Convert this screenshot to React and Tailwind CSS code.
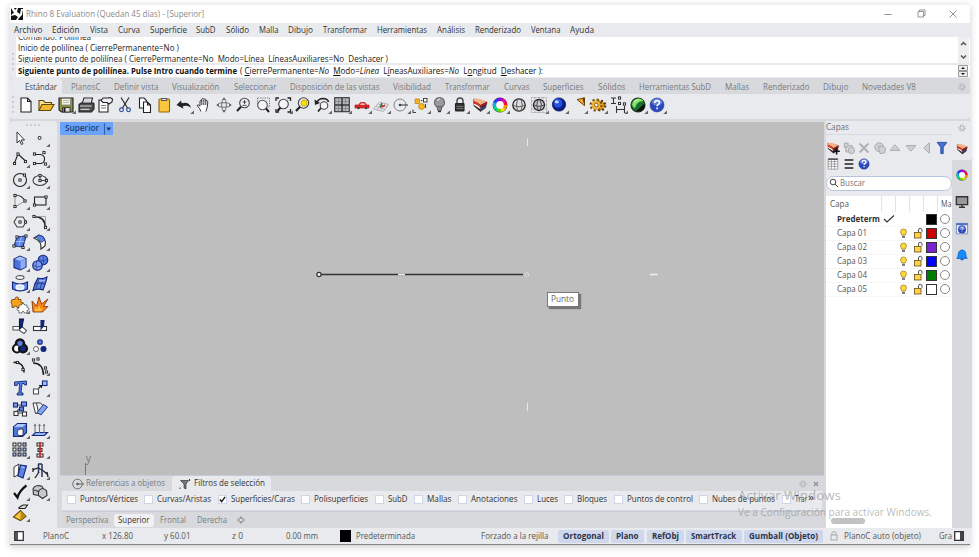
import React, { useLayoutEffect, useRef, useState } from "react";

/* Single-line label, condensed or widened by a computed factor so it fills the given width. */
function Fit({ w, children, className = "" }) {
  const ref = useRef(null);
  const [k, setK] = useState(1);
  useLayoutEffect(() => {
    setK(w / ref.current.getBoundingClientRect().width);
  }, [w]);
  return (
    <span className={"block shrink-0 whitespace-pre " + className} style={{ width: w }}>
      <span ref={ref} className="inline-block origin-left" style={{ transform: `scaleX(${k})` }}>{children}</span>
    </span>
  );
}

const K = "#222";
const B = "#5b83e6";
const N = "#14277a";

function Cell({ children, tri, className = "" }) {
  return (
    <svg viewBox="0 0 20 20" className={"h-5 w-5 shrink-0 overflow-visible " + className} fill="none" stroke={K} strokeWidth="1.1">
      {children}
      {tri && <path d="M20 15.500V19H16.200Z" fill="#666" stroke="none" />}
    </svg>
  );
}

/* Small square control points. */
function Pts({ p }) {
  return p.map(([x, y], i) => (
    <rect key={i} x={x - 1.1} y={y - 1.1} width="2.2" height="2.2" fill="#fff" stroke="#222" strokeWidth=".9" />
  ));
}

function Help({ r = 7 }) {
  return (
    <>
      <circle cx="10" cy="10" r={r} fill="#2c49bb" stroke="#233a91" strokeWidth=".6" />
      <ellipse cx="10" cy="7" rx={r * 0.75} ry={r * 0.5} fill="#7790e6" stroke="none" opacity=".75" />
      <path d="M7.700 8q0-2.400 2.400-2.400t2.400 2q0 1.200-1.400 2-1 .6-1 1.700M10.100 12.600v1.600" stroke="#fff" strokeWidth="1.600" />
    </>
  );
}

function Wheel({ r = 5.5, w = 3.2 }) {
  const c = 2 * Math.PI * r;
  const cols = ["#ff9800", "#ffee00", "#54e000", "#00d890", "#00b8f0", "#2040ff", "#9000f0", "#f000b0", "#ff1030"];
  return (
    <>
      <circle cx="10" cy="10" r={r + w / 2 + 0.3} fill="#333" stroke="none" />
      {cols.map((k, i) => (
        <circle key={k} cx="10" cy="10" r={r} stroke={k} strokeWidth={w} strokeDasharray={`${c / 9 + 0.3} ${c}`} strokeDashoffset={-(i * c) / 9} />
      ))}
      <circle cx="10" cy="10" r={r - w / 2} fill="#fff" stroke="none" />
    </>
  );
}

function LayerWedge() {
  return (
    <>
      <path d="M3.500 4l6 1 7.500 2-1.500 6-5 3.500-6.500-5.500z" fill="#3a1512" stroke="#3a1512" strokeWidth=".5" />
      <path d="M3.500 4q5-1.500 9 1l4.500 1.500-6.500 3.500q-3-3-7-4z" fill="#f7b28a" stroke="none" />
      <path d="M3.500 6q4 1 7 4.500v1.800Q7.500 9 3.700 8z" fill="#f3381f" stroke="none" />
      <path d="M10.500 10.500L17 7l-.4 2-6.100 3.300z" fill="#b01f1a" stroke="none" />
      <path d="M3.800 8.500q4 1 6.700 4.200v1.500L4 10z" fill="#f6f6f6" stroke="none" />
      <path d="M10.500 13l5.500-3-.7 3-4.800 3z" fill="#37457f" stroke="none" />
    </>
  );
}

const TOP = [
  [0, <path d="M5 3h6.500L15 6.500V17H5zM11.500 3v3.500H15" fill="#fff" />],
  [0, <><path d="M3 15.500V5.500h4.500l1.500 2h6.500v2.500" fill="#f7e08b" stroke="#5d480c" /><path d="M3 15.500l3-6h12l-3.500 6z" fill="#f5b92a" stroke="#5d480c" /></>],
  [1, <><path d="M3 3h14v14H5.500L3 15z" fill="#8c8e42" /><path d="M5.500 3.500h9V10h-9z" fill="#f2f2e2" stroke="#777" strokeWidth=".7" /><path d="M7 5.500h6M7 7.500h6" stroke="#aaa" strokeWidth=".8" /><path d="M6.500 12.500h7.500V17H6.500z" fill="#ddd" strokeWidth=".8" /><path d="M8.500 13v4" strokeWidth="2" /></>],
  [0, <><path d="M6 9l2-6h8.500L15 9" fill="#fff" /><path d="M3 9.500L5 8h12.500l.5 1v5l-2.500 3H3z" fill="#4c4c4c" /><path d="M4 11h11.500" stroke="#ccc" /><path d="M8.500 5h6M8 7h6" stroke="#999" strokeWidth=".8" /><path d="M4.500 14.300h9" stroke="#e4e4e4" /></>],
  [0, <><path d="M4 5h9v12H4z" fill="#fff" /><path d="M6 5.500L8 3h5l2-.5 2.500 1.500-.5 3-3 2-2-1.500H8z" fill="#eee" /><path d="M6 10.500h5M6 13h5" stroke="#777" /></>],
  [0, <><path d="M6 2.500l6.500 10.500M14 2.500L7.500 13" /><circle cx="6.500" cy="14.800" r="1.900" stroke="#26479a" /><circle cx="13.500" cy="14.800" r="1.900" stroke="#26479a" /></>],
  [0, <><path d="M4.500 3h4.500l2.500 2.500V13h-7z" fill="#fff" /><path d="M8.500 7h4l3 3v7.500h-7zM12.500 7v3h3" fill="#fff" /></>],
  [0, <><rect x="5" y="4" width="10.500" height="13" rx="1" fill="#fcc63c" stroke="#92640c" /><path d="M7.700 5.500V3.500h5v2z" fill="#eee" stroke="#555" /></>],
  [1, <path d="M2.500 10L7 5.500l.7 2.700q7.300-2.200 9.300 4.500-3.500-3-8.300-1.500l.8 2.600z" fill="#222" stroke="none" />],
  [0, <path d="M7 16.500q-1-3-4-6 1-1.500 3 .5V6q.9-1.300 1.800 0V4q1-1.300 2 0v.5q1-1.300 2 0V6q1.200-1 2 .5 0 6-2 10M7.800 6v4M9.800 5v5M11.800 5.500v4.500" fill="#fff" strokeWidth=".9" />],
  [0, <><ellipse cx="10" cy="10" rx="6.500" ry="2.300" stroke="#666" strokeWidth=".9" /><ellipse cx="10" cy="10" rx="2.300" ry="6.500" stroke="#666" strokeWidth=".9" /><path d="M10 2l-1.500 3h3zM10 18l-1.500-3h3zM2 10l3-1.500v3zM18 10l-3-1.500v3z" fill="#666" stroke="none" /></>],
  [0, <><circle cx="11.500" cy="8" r="4.800" fill="#f4f4f4" stroke="#444" /><path d="M8 11.800L4 16" strokeWidth="2" /><path d="M9.500 7h4M11.500 5v4M9.500 10.300h4" strokeWidth=".8" /></>],
  [0, <><rect x="4.500" y="3" width="12" height="9" stroke="#666" strokeDasharray="1.200 1.200" strokeWidth=".9" /><circle cx="9.500" cy="10" r="4.800" fill="#f4f4f4" stroke="#555" /><path d="M13 13.500l3 3.500" strokeWidth="2" /></>],
  [1, <><path d="M3 6V3h3M14.500 3h3v3M3 14v3h3M14.500 17h3v-3" strokeWidth="1.300" /><circle cx="10.500" cy="9" r="4.800" fill="#f4f4f4" stroke="#444" /><path d="M7.500 12.500L4.500 16" strokeWidth="2" /></>],
  [0, <><circle cx="11.500" cy="8" r="5.200" fill="#e9e9e9" stroke="#444" /><circle cx="12" cy="8" r="3" fill="#ffe000" stroke="#a08c00" strokeWidth=".6" /><path d="M8 11.800L4 16" strokeWidth="2.200" /></>],
  [1, <><path d="M5 7q2-3.500 6-3.500 5 .2 5.500 3.500" strokeWidth="1.600" /><path d="M2.500 4.500l.5 5.500 5-2z" fill="#222" stroke="none" /><circle cx="12" cy="10.500" r="3.800" fill="#f4f4f4" stroke="#444" /><path d="M9 13L6 16.500" strokeWidth="1.800" /></>],
  [1, <><rect x="2.700" y="2.700" width="14.600" height="14" fill="#b4b8bd" stroke="#333" /><path d="M10 3v14M3 10h14" stroke="#333" strokeWidth="1.500" /><path d="M6.500 3v14M13.500 3v14M3 6.500h14M3 13.500h14" stroke="#666" strokeWidth=".5" /></>],
  [1, <><path d="M3 10h3.500L8.500 7.500H13l1.500 2.500h2.500v3H3z" fill="#da2626" stroke="#c01a1a" strokeWidth=".7" /><path d="M9 8.300h3.300l.8 1.700H8z" fill="#f3b6b0" stroke="none" /><circle cx="6.500" cy="13" r="1.300" fill="#444" stroke="none" /><circle cx="14" cy="13" r="1.300" fill="#444" stroke="none" /></>],
  [1, <><path d="M2.500 14l6-7 9 2.500-5 7zM5 11.500l9 3M7 9l9 2.500M6 15l5-7M9.500 15.500l5-7" stroke="#a5a5a5" strokeWidth=".8" /><path d="M9 12l5-1.500" stroke="#c22" strokeWidth="1.400" /><path d="M9.500 12l1.500-4" stroke="#197a2d" strokeWidth="1.400" /></>],
  [1, <><circle cx="9" cy="10" r="6" stroke="#777" strokeWidth=".9" /><path d="M9 10H17" stroke="#444" /><circle cx="9" cy="10" r="1.300" fill="#444" stroke="none" /></>],
  [1, <><rect x="4" y="4" width="4.500" height="4.500" fill="#f8b51c" stroke="#ad7200" strokeWidth=".6" /><rect x="12.500" y="3.500" width="3.500" height="3.500" fill="#fff" stroke="#333" strokeWidth=".9" /><circle cx="10.500" cy="11.500" r="3" fill="#fbb91c" stroke="#a87203" strokeWidth=".6" /><path d="M10 5.500h1.500M2 14.500v3h3M14.500 9v4" stroke="#444" /></>],
  [1, <><circle cx="9.500" cy="7.500" r="5" fill="#9a9a9a" stroke="#666" /><path d="M7 11.500l1 4h3l1-4z" fill="#8b8b8b" stroke="#666" /><path d="M8 16.500h3" stroke="#333" strokeWidth="1.400" /><path d="M7.500 5.500q1-1.500 2.500-1.500" stroke="#eee" /></>],
  [1, <><path d="M7 9V6q0-3 3-3t3 3v3" strokeWidth="1.400" stroke="#444" /><rect x="5.500" y="8.500" width="8.500" height="7.500" rx=".5" fill="#333" /><path d="M6.500 11.500h7M6.500 13.500h7" stroke="#888" strokeWidth=".8" /></>],
  [1, <LayerWedge />],
  [1, <Wheel />],
  [0, <><circle cx="10" cy="10" r="6.200" fill="#ddd" stroke="#222" strokeWidth="1.300" /><path d="M3.800 10.500q6.200 2.500 12.400 0M8.500 4q-2 6 0 12M12 4q2.500 6 0 12" stroke="#555" strokeWidth=".9" /></>],
  [1, <><path d="M2.500 2.500h15v15h-15zM2.500 6h15M2.500 10h15M2.500 14h15M6 2.500v15M10 2.500v15M14 2.500v15" stroke="#777" strokeWidth=".7" strokeDasharray="1 1" /><circle cx="10" cy="10" r="5.500" fill="#c6c6c6" stroke="#222" strokeWidth="1.300" /><path d="M4.500 10q5.500 3 11 0M9 4.500q-2.500 5 0 11M11 4.500q3 5 0 11" stroke="#444" strokeWidth=".9" /></>],
  [1, <><circle cx="10" cy="9.500" r="6.600" fill="#0b1f88" stroke="#0a1450" strokeWidth=".8" /><circle cx="9" cy="8" r="4.500" fill="#2352dd" stroke="none" /><ellipse cx="7.800" cy="6.800" rx="2" ry="1.600" fill="#c6d7ff" stroke="none" /></>],
  [1, <><path d="M9 4.500l7.500-1.800v8z" fill="#f6a52c" stroke="#6a3b08" strokeWidth=".9" /><path d="M14.500 3.500l2-.8v8z" fill="#55351a" stroke="none" /></>],
  [1, <><circle cx="12.500" cy="10.500" r="4.600" fill="#e4a52c" stroke="#5c3c06" strokeWidth="2.600" strokeDasharray="1.900 1.700" /><circle cx="8" cy="10" r="5.200" stroke="#7a520c" strokeWidth="2.600" strokeDasharray="2.100 1.980" /><circle cx="8" cy="10" r="3.600" fill="#f5bd3e" stroke="#f0b02e" strokeWidth="1.800" /><circle cx="8.300" cy="10" r="1.800" fill="#fff" stroke="#6a470a" strokeWidth=".8" /></>],
  [1, <><path d="M3 3h5M3 8.500h5M5.500 3v5.500M8.500 11v7M16.500 11v7M8.500 14.500h8" stroke="#333" /><Pts p={[[11.500, 3], [11.500, 8.500], [16.500, 9]]} /></>],
  [1, <><circle cx="10" cy="10" r="7" fill="#1c6f2e" stroke="#16331c" /><path d="M4 9.500q1-6 7.500-6 3 .5 4 3-6-1.500-8.500 6.500-2.500-.5-3-3.500z" fill="#7fe26a" stroke="none" /><path d="M8 16l8.500-7.500q1 4-2 6.500-3 2.500-6.500 1z" fill="#111" stroke="none" /><path d="M6 7q2-2.500 4.500-2.300" stroke="#dcffd0" /></>],
  [1, <Help />],
];

const LEFT = [
  [0, <path d="M7 4v11l2.500-2.500 2 4 1.500-.8-2-3.700h3.500z" fill="#fff" strokeWidth=".9" />],
  [1, <rect x="8.300" y="8.500" width="2.600" height="2.800" rx=".5" fill="#fff" strokeWidth=".9" />],
  [1, <><path d="M4.500 14L8 5l7.500 7" /><Pts p={[[4.500, 14.500], [8, 5], [15.500, 12.500]]} /></>],
  [1, <><path d="M5 5.500h5.500q4.500 1 4 5-.5 4-4.500 4H5" /><Pts p={[[4.500, 5], [14, 3.500], [4.500, 14.500], [15.500, 15]]} /></>],
  [1, <><circle cx="10" cy="10" r="6.500" /><Pts p={[[10, 10], [14.500, 5]]} /></>],
  [1, <><ellipse cx="10" cy="10.500" rx="7" ry="5" stroke="#444" /><path d="M10 5v5.500h7" stroke="#444" /><Pts p={[[10, 10.500], [10, 5.500], [16.500, 10.500]]} /></>],
  [1, <><path d="M5 4q7 0 10 6" stroke="#333" /><path d="M15 10L5 16M5 4v12" stroke="#888" strokeWidth=".9" /><Pts p={[[5, 4.500], [15, 10], [5, 15.500]]} /></>],
  [1, <><rect x="4.500" y="6" width="11.500" height="8" /><Pts p={[[4.500, 14], [16, 6]]} /></>],
  [1, <><path d="M4 10l3-5h6l3 5-3 5H7z" stroke="#444" /><Pts p={[[10, 10], [15.500, 10]]} /></>],
  [1, <><path d="M4 4.500q11 0 11.500 11" strokeWidth="1.700" /><path d="M4 4.500h11.500v11" stroke="#888" strokeWidth=".7" /><Pts p={[[4, 4.500], [15.500, 15.500]]} /></>],
  [1, <><path d="M7 5l9-1-3 11-9-1z" fill={B} stroke={N} /><path d="M11.500 4.500l-3 10M5.500 9.500l9 0" stroke="#b2c7ff" strokeWidth=".8" /><Pts p={[[7, 5], [16, 4], [13, 15.500], [4, 14]]} /></>],
  [1, <><path d="M4 6l5-3q8 2 6 11l-4 3q1-8-7-11z" fill="#fff" /><path d="M6 5l3-2q5 1 6 5l-4 2.500Q9 7 6 5z" fill={B} stroke={N} strokeWidth=".7" /></>],
  [1, <><path d="M4 6l6-3 6 2.500v8.500l-5.500 3L4 14.500z" fill="#4a72dc" stroke={N} /><path d="M4.500 6l6 2 5-2.500L10 3.500z" fill="#a8c0fc" stroke="none" /><path d="M10.500 8.500l5-2.500v8l-5 2.500z" fill="#8eabf5" stroke="none" /></>],
  [1, <><circle cx="13" cy="7" r="4.800" fill={B} stroke={N} /><circle cx="7.500" cy="12.500" r="4.800" fill="#7c9df2" stroke={N} /><path d="M3 12.500q5 2.500 9.500 0M7 7.800q-2 4 0 9.500M9 6.500q4 2.500 8.500 0M12.500 2.500q2 4 1 8" stroke="#203891" strokeWidth=".7" /></>],
  [1, <><ellipse cx="10" cy="3.500" rx="4" ry="1.900" stroke="#555" fill="#fff" /><path d="M2.500 8q7.500 4 15 0v7q-7.500 4-15 0z" fill={B} stroke={N} /><ellipse cx="10" cy="13.200" rx="4" ry="2.300" fill="#dce5ff" stroke="#fff" /></>],
  [1, <><path d="M8 4q4 1.500 9-1l-1.500 6-2.500 7q-5-2-10 .5l2-7z" fill={B} stroke={N} /><path d="M5 10q5-2 10 0M9 5.500l-3 9M13 5l-3 10" stroke="#192f79" strokeWidth=".8" /><path d="M9 6.500q3 1 6-.5" stroke="#bccbff" /></>],
  [1, <><path d="M3 5h3q0-3 2.500-2.500Q10.500 3 9 5h3v3q3-.5 2.500 1.500T12 11v2H8q0-2-2-1.500T5 13H3v-3q-2-3 0-5z" fill="#f7a11c" stroke="#684106" strokeWidth=".8" transform="translate(-1 -.5)" /><path d="M9 10h2.500q0-2 1.700-1.500t1 1.500H17v2.500q2 0 2 1.500t-2 1.500V18h-2.500q0-1.500-1.500-1.500T12 18H9v-2.500q-2 0-2-1.300T9 13z" fill="#fff" stroke="#444" strokeWidth=".7" /></>],
  [0, <><path d="M3 17L2 6l4.500 5L9 2l2.500 7L18 4l-4.500 7.500 4.500 0-5.500 5.500z" fill="#f48316" stroke="#7d2d05" strokeWidth=".8" /><path d="M4.500 16.300l1-4 2 2 1.500-4 1.500 4 2.500-1.500-2 3.500z" fill="#ffc040" stroke="none" /></>],
  [0, <><path d="M3 10.500h9l4.500 4-2.500 3-5-3.500H3z" fill="#fff" stroke="#555" /><path d="M9.500 3h4l-1.500 8-2.500 2z" fill={N} stroke="#081344" /></>],
  [0, <><rect x="3.500" y="10.500" width="13" height="4" fill="#fff" stroke="#333" /><path d="M11 4.500h3l-.5 5.500-2.500 3z" fill={N} stroke={N} /></>],
  [1, <><circle cx="10" cy="7.500" r="4" stroke="#111" strokeWidth="2.400" /><circle cx="7" cy="12.500" r="4" fill="#fff" stroke="#111" strokeWidth="2.200" /><circle cx="13" cy="12.500" r="4" fill={N} stroke="#111" strokeWidth="2.200" /><circle cx="10" cy="7.500" r="3" fill={B} stroke="#111" strokeWidth=".7" /></>],
  [0, <><circle cx="10" cy="6" r="2.300" fill={B} stroke={N} /><circle cx="6" cy="13" r="2.500" fill="#fff" stroke="#555" strokeWidth=".9" /><circle cx="13.500" cy="13" r="2.500" fill={N} stroke={N} /></>],
  [0, <><path d="M3.500 5.500q10-1 10.500 10" strokeWidth="1.600" /><Pts p={[[7.500, 5.500], [13, 12.500]]} /></>],
  [1, <><path d="M3 6q10 0 10.500 12" strokeWidth="1.600" /><Pts p={[[3.500, 3], [8, 2], [15.500, 11], [16.500, 15]]} /></>],
  [0, <path d="M4.500 4l12-1v4h-2l-.5-1.500h-2L11 15h2v2H7l.5-2H9l.5-9.500H8L7 7.500H4.500z" fill={B} stroke={N} strokeWidth=".9" />],
  [1, <><rect x="3.500" y="11" width="5" height="5" fill="#fff" stroke="#555" /><rect x="12.500" y="3" width="4.500" height="4.500" fill="#a9c0ff" stroke={N} /><path d="M8.500 10.500l3-3M9 7.500h2.500V10" /></>],
  [0, <><path d="M7 6h5M7 12l5-4M8 14h6" stroke="#444" /><rect x="3.500" y="4" width="4" height="4" fill="#7c9df2" stroke={N} /><rect x="11.500" y="3" width="5" height="4" fill="#7c9df2" stroke={N} /><rect x="9.500" y="8" width="4" height="4" fill={B} stroke={N} /><rect x="4" y="12.500" width="4" height="4" fill="#fff" stroke="#333" /><rect x="12.500" y="13" width="4" height="4" fill="#fff" stroke="#333" /></>],
  [0, <><path d="M3 4h3.500l2 10-3 .5z" fill="#fff" strokeWidth=".9" /><path d="M6.500 4q5-1 6 2.500" strokeWidth=".9" /><path d="M13.500 5.500l4 2.500-6.500 8-4-2.500z" fill="#86a3ed" stroke={N} strokeWidth=".9" /></>],
  [1, <><path d="M3.500 7l4-3.500h9v9l-4 4h-9z" fill="#4d78dd" stroke={N} /><path d="M4 7l3.500-3h8.500L12.500 7z" fill="#abc3fb" stroke="none" /><path d="M7.500 10.500q2-2 5.500-1.500v6.500H8.500q-2-2-1-5z" fill="#fff" stroke="#222" strokeWidth=".8" /></>],
  [1, <><path d="M2.500 15.500l3-3h12l-3 3z" fill="#9bb4f7" stroke={N} /><path d="M5 13V4.500M9.500 13V4.500M14 13V4.500" stroke="#777" /><path d="M3.500 6L5 3.500 6.500 6zM8 6l1.500-2.500L11 6zM12.500 6L14 3.500 15.500 6z" fill="#777" stroke="none" /></>],
  [1, <>{[4.5, 9.5, 14.5].map((y) => [4.5, 9.5, 14.5].map((x) => <rect key={x + "-" + y} x={x - 1.5} y={y - 1.5} width="3" height="3" fill={x + y > 14 ? "#a9c0ff" : "#fff"} stroke="#222" strokeWidth="1" />))}</>],
  [1, <><path d="M7 3h6v3H7zM7 14h6v3H7zM8 8.500h4v3H8z" fill="#ddd" stroke="#333" /><path d="M10 2v16" stroke="#d81c1c" strokeWidth="1.600" /></>],
  [1, <><path d="M4 6l5-3-1 11-4 2z" fill="#fff" strokeWidth=".9" /><path d="M10.500 4l6 1-3.500 12-5-2z" fill={B} stroke={N} /><path d="M11.500 6l3 .5" stroke="#c4d2ff" /></>],
  [1, <><path d="M3 9q5-3 7-1 3 1 7 5M9 11l-4 6M3 7v4M17 11l1 5" strokeWidth="1.300" /><path d="M8 3h4M8.500 3v9M12 3v13" stroke="#25355e" strokeWidth="1.500" /></>],
  [1, <path d="M4 11l3.500 4.500q2-7 9-12" stroke="#111" strokeWidth="2.200" />],
  [1, <><path d="M3 7q1-3 5-3.500 5 0 5 3l3.500 2 .5 5-4.500 3-4-3-5-1z" fill="#c6c8cb" stroke="#333" /><path d="M8.500 13q-1-6 4.500-6.500M4 8l4.500 1.500" stroke="#333" /></>],
  [1, <><path d="M3.500 14l7-6.500 5.500 6-5.500 4z" fill="#f8c63a" stroke="#6b4c08" /><path d="M10.500 8.500v8.500l5-3.500z" fill="#b98b16" stroke="none" /><path d="M9 4.500L13 2h4.500L15 5.500H9z" fill="#ddd" /></>],
];

function Gear({ className }) {
  return (
    <svg viewBox="0 0 12 12" className={"shrink-0 " + className} fill="none" stroke="#b4b6ba">
      <circle cx="6" cy="6" r="2.400" strokeWidth="1.300" />
      <circle cx="6" cy="6" r="4" strokeWidth="1.500" strokeDasharray="1.300 1.840" />
    </svg>
  );
}

const MENU = [["Archivo", 28.5], ["Edición", 27.5], ["Vista", 18], ["Curva", 22], ["Superficie", 37], ["SubD", 19.5], ["Sólido", 23], ["Malla", 19.5], ["Dibujo", 25], ["Transformar", 44], ["Herramientas", 50], ["Análisis", 28], ["Renderizado", 46], ["Ventana", 29.5], ["Ayuda", 24]];
const TABS = [["PlanosC", 29.5], ["Definir vista", 44.5], ["Visualización", 47.5], ["Seleccionar", 42.5], ["Disposición de las vistas", 89.5], ["Visibilidad", 38], ["Transformar", 44.5], ["Curvas", 25.5], ["Superficies", 40.5], ["Sólidos", 27.5], ["Herramientas SubD", 72], ["Mallas", 24], ["Renderizado", 46.5], ["Dibujo", 25.5], ["Novedades V8", 54]];
const FILTERS = [["Puntos/Vértices", 58], ["Curvas/Aristas", 54], ["Superficies/Caras", 64, true], ["Polisuperficies", 54], ["SubD", 19.5], ["Mallas", 24.5], ["Anotaciones", 46.5], ["Luces", 21], ["Bloques", 30], ["Puntos de control", 66], ["Nubes de puntos", 63], ["Trar", 12]];
const LAYERS = [["Capa 01", "bg-[#cc0000]"], ["Capa 02", "bg-[#7d22d2]"], ["Capa 03", "bg-[#0000ff]"], ["Capa 04", "bg-[#007d00]"], ["Capa 05", "bg-white"]];

function TitleBar() {
  return (
    <div className="flex h-[18px] items-center bg-white pl-[1px]">
      <svg viewBox="0 0 12 12" className="h-3 w-3">
        <rect width="12" height="12" fill="#111" />
        <path d="M0 0h3l1 2 2-2h1L6 4l3 2 1-5h2l-1 6-3 3-1 2H5l2-3-3-2-4 1 1-2 2-1z" fill="#fff" />
      </svg>
      <Fit w={178} className="ml-[3px] text-[9.600px] text-[#8b8b8b]">Rhino 8 Evaluation (Quedan 45 días) - [Superior]</Fit>
      <svg viewBox="0 0 80 12" className="mr-3 ml-auto h-3 w-20" fill="none" stroke="#888" strokeWidth=".9">
        <path d="M6.500 6.500h7M40 3.500h5.500V9H40zM41.500 3.500V2H47v5.500h-1.500M71.500 2.500l7 7M78.500 2.500l-7 7" />
      </svg>
    </div>
  );
}

function CommandArea() {
  return (
    <div className="flex h-[41px] bg-[#e8eaee]">
      <div className="flex w-[6px] flex-col items-center justify-center gap-[3px] pt-2">
        {[0, 1, 2, 3].map((i) => <span key={i} className="h-[2px] w-[2px] rounded-full bg-[#c0c2c7]" />)}
      </div>
      <div className="flex grow flex-col text-[9.400px] text-[#222]">
        <div className="flex h-[26px] justify-between bg-white">
          <div className="flex h-[26px] flex-col justify-end overflow-hidden pl-[2.500px] leading-[11px]">
            <Fit w={73} className="h-[11px]">Comando: Polilínea</Fit>
            <Fit w={161} className="h-[11px]">Inicio de polilínea ( CierrePermanente=No )</Fit>
            <Fit w={370} className="h-[10.500px]">Siguiente punto de polilínea ( CierrePermanente=No  Modo=Línea  LíneasAuxiliares=No  Deshacer )</Fit>
          </div>
          <svg viewBox="0 0 11 26" className="mr-[1px] h-[26px] w-[11px] bg-[#eee]" fill="none" stroke="#555" strokeWidth="1.500">
            <path d="M3 8l2.500-2.500L8 8M3 18.500l2.500 2.500L8 18.500" />
          </svg>
        </div>
        <div className="mt-[1.500px] flex h-[12.500px] items-center bg-white pl-[2.500px] leading-[12px] text-[#111]">
          <Fit w={219} className="font-bold">Siguiente punto de polilínea. Pulse Intro cuando termine</Fit>
          <Fit w={303} className="ml-[3px]">( <u>C</u>ierrePermanente=<i>No</i>  <u>M</u>odo=<i>Línea</i>  L<u>í</u>neasAuxiliares=<i>No</i>  L<u>o</u>ngitud  <u>D</u>eshacer ):</Fit>
          <svg viewBox="0 0 10 12" className="mr-[1.500px] ml-auto h-3 w-[10px]">
            <path d="M.5.500h9v5h-9zM.5 6.500h9v5h-9z" fill="#eee" stroke="#999" />
            <path d="M3 4l2-2 2 2zM3 8l2 2 2-2z" fill="#111" />
          </svg>
        </div>
      </div>
    </div>
  );
}

function TopToolbar() {
  return (
    <div className="bg-[#d8d9dd] text-[9.400px] text-[#777a80]">
      <div className="flex h-[16px] items-center">
        <div className="flex h-full w-[52px] items-center rounded-t-[4px] bg-[#e8eaee] pt-[3px] pl-[15px] text-[#444]"><Fit w={32}>Estándar</Fit></div>
        <div className="ml-[9px] flex gap-[13.900px] pt-[3px]">
          {TABS.map(([t, w]) => <Fit key={t} w={w}>{t}</Fit>)}
        </div>
        <Gear className="mt-[2px] mr-[3px] ml-auto h-[10px] w-[10px]" />
      </div>
      <div className="flex h-[25px] items-center rounded-b-[4px] bg-[#e8eaee] pb-[4px]">
        <div className="mr-[1px] flex w-[6px] flex-col items-center gap-[3px]">
          {[0, 1, 2, 3].map((i) => <span key={i} className="h-[2px] w-[2px] rounded-full bg-[#c0c2c7]" />)}
        </div>
        {TOP.map(([tri, art], i) => (
          <div key={i} className="flex w-[19.720px] shrink-0 justify-center"><Cell tri={tri}>{art}</Cell></div>
        ))}
      </div>
    </div>
  );
}

function SideToolbar() {
  return (
    <div className="flex w-[47px] shrink-0 flex-col rounded-t-[4px] bg-[#e8eaee]">
      <div className="flex h-[7px] items-center justify-center gap-[2px]">
        {[0, 1, 2, 3].map((i) => <span key={i} className="h-[2px] w-[2px] rounded-full bg-[#c0c2c7]" />)}
      </div>
      <div className="ml-[0.500px] grid w-10 auto-rows-[20.800px] grid-cols-2 items-center">
        {LEFT.map(([tri, art], i) => <Cell key={i} tri={tri}>{art}</Cell>)}
      </div>
    </div>
  );
}

function Viewport() {
  return (
    <div className="relative h-[353px] bg-[#bebebe]">
      <div className="flex h-[13px] w-[53px] items-center bg-[#6ba3fb] pl-[5.500px] text-[9.400px] font-semibold text-[#1d3c70]">
        <Fit w={34}>Superior</Fit>
        <svg viewBox="0 0 10 12" className="ml-[4px] h-3 w-[10px]"><path d="M1.500 0v12" stroke="#2d5596" /><path d="M3.500 4.500h5L6 8z" fill="#1d3c70" /></svg>
      </div>
      <svg viewBox="0 0 764 353" className="absolute inset-0 h-[353px] w-[764px]" fill="none">
        <path d="M260 152.500h203" stroke="#333" strokeWidth="1.300" />
        <path d="M338 152.500h7M590 152.500h7.500" stroke="#f2f2f2" strokeWidth="1.600" />
        <path d="M467.500 16.500v7.500M467.500 281v8" stroke="#e8e8e8" />
        <circle cx="259" cy="152.500" r="2.100" fill="#fff" stroke="#333" strokeWidth="1.200" />
        <circle cx="467" cy="152.500" r="1.800" stroke="#eee" strokeDasharray="1.500 .8" />
        <path d="M25.500 341v12" stroke="#777" />
      </svg>
      <span className="absolute top-[329px] left-[26.500px] text-[10px] leading-[14px] text-[#777]">y</span>
      <div className="absolute top-[170px] left-[487px] flex h-[15px] w-8 items-center justify-center border border-[#777] bg-white text-[9.400px] text-[#666] shadow-[2px_2px_1px_#777]"><Fit w={23}>Punto</Fit></div>
    </div>
  );
}

function FilterPanel() {
  return (
    <div className="ml-[2px] flex h-[38px] flex-col border-t border-[#c5cad8] bg-[#d8d9dd] text-[9.400px] text-[#777a80]">
      <div className="flex h-[15px] shrink-0 items-center">
        <svg viewBox="0 0 12 12" className="ml-[10px] h-3 w-3" fill="none" stroke="#666"><circle cx="5.500" cy="6" r="4.800" strokeWidth=".9" /><path d="M5.500 6H12" /><circle cx="5.500" cy="6" r="1.300" fill="#555" stroke="none" /></svg>
        <Fit w={79} className="ml-[2.500px]">Referencias a objetos</Fit>
        <div className="ml-[7px] flex h-full w-[99px] items-center rounded-t-[4px] bg-[#e8eaee] pl-[7px] text-[#333]">
          <svg viewBox="0 0 12 12" className="h-3 w-3"><path d="M1.500 2.500h8L7 6v5l-2-1V6z" fill="#777" stroke="#333" strokeWidth=".7" /><path d="M10.500 1v2M1 9.500v1.500" stroke="#333" /></svg>
          <Fit w={71} className="ml-[2.500px]">Filtros de selección</Fit>
        </div>
        <Gear className="ml-auto h-[10px] w-[10px]" />
        <svg viewBox="0 0 8 8" className="mr-[4px] ml-[4px] h-2 w-2"><path d="M2 2l4 4M6 2L2 6" stroke="#909298" strokeWidth="1.300" /></svg>
      </div>
      <div className="mr-[2px] flex h-[19px] shrink-0 items-center gap-[6.500px] bg-[#e8eaee] pb-[2px] pl-[5px] text-[#333]">
        {FILTERS.map(([t, w, on]) => (
          <div key={t} className="flex shrink-0 items-center gap-[4px]">
            <span className="flex h-[9px] w-[9px] border border-[#cfd5e6] bg-white">
              {on && <svg viewBox="0 0 8 8" className="h-[7px] w-[7px]"><path d="M1 4l2 2.500L7 1" fill="none" stroke="#111" strokeWidth="1.500" /></svg>}
            </span>
            <Fit w={w}>{t}</Fit>
          </div>
        ))}
        <Fit w={6} className="-mt-[7px] -ml-[5px] text-[11px] leading-[11px]">»</Fit>
      </div>
      <div className="mt-[1px] h-px bg-[#c5cad8]" />
    </div>
  );
}

function ViewTabs() {
  return (
    <div className="flex h-[14px] items-center bg-[#d8d9dd] text-[9.400px] text-[#777a80]">
      <Fit w={42.5} className="ml-[6px]">Perspectiva</Fit>
      <div className="ml-[6px] flex h-[13px] w-[40px] items-center justify-center rounded-[3px] bg-[#eff0f4] text-[#333]"><Fit w={31.5}>Superior</Fit></div>
      <Fit w={26} className="ml-[6px]">Frontal</Fit>
      <Fit w={30} className="ml-[10.500px]">Derecha</Fit>
      <svg viewBox="0 0 8 8" className="ml-[10px] h-2 w-2" fill="none" stroke="#777" strokeWidth=".8"><path d="M3.300 3V1h1.400v2H7v2H4.700v2H3.300V5H1V3z" fill="#eee" /></svg>
    </div>
  );
}

function LayerRow({ name, color, current }) {
  return (
    <div className="flex h-[14px] items-center border-b border-dotted border-[#eee]">
      <Fit w={current ? 43 : 30} className={current ? "ml-[11.500px] font-bold text-[#333]" : "ml-[11.500px]"}>{name}</Fit>
      {current ? (
        <svg viewBox="0 0 12 10" className="ml-[3px] h-[10px] w-[42.500px] shrink-0" preserveAspectRatio="xMinYMid"><path d="M1 5l3 3L11 1.500" fill="none" stroke="#333" strokeWidth="1.200" /></svg>
      ) : (
        <svg viewBox="0 0 28 12" className="ml-[30.500px] h-3 w-[28px] shrink-0" fill="none">
          <path d="M2.500 5a3 3 0 1 1 6 0L7.200 8H3.800z" fill="#ffd83a" stroke="#9b7815" strokeWidth=".7" />
          <path d="M4 8.700h3v2.200H4z" fill="#777" />
          <rect x="16.500" y="5.500" width="6.500" height="5.500" fill="#ffd34a" stroke="#654e12" strokeWidth=".8" />
          <path d="M20.500 5V3q0-1.700 1.700-1.700T24 3v1.800" stroke="#555" />
        </svg>
      )}
      <span className={"h-[11px] w-[11px] shrink-0 border border-[#333] " + color} />
      <span className="ml-[3px] h-[10px] w-[10px] shrink-0 rounded-full border border-[#888] bg-white" />
    </div>
  );
}

function LayerPanel() {
  const g = { fill: "#d0d1d4", stroke: "#a3a5a9", strokeWidth: 1.1 };
  return (
    <div className="flex w-[126px] shrink-0 flex-col bg-[#e8eaee] text-[9.400px] text-[#555]">
      <div className="flex h-[14px] shrink-0 items-center border-b border-[#d8dae0] text-[#6c6f75]"><Fit w={23}>Capas</Fit></div>
      <div className="flex h-[22.500px] shrink-0 items-end">
        <Cell className="-mr-[4.400px] -ml-[2.500px] scale-[.8]"><LayerWedge /><path d="M14.500 10v8M10.500 14h8" stroke="#111" strokeWidth="2" /></Cell>
        <Cell className="-mr-[4.400px] scale-[.8]"><g {...g}><path d="M4 4h5v5H4zM6 9v6h4" /><circle cx="13" cy="13" r="4" /><path d="M10 7h4v3" /></g></Cell>
        <Cell className="-mr-[4.400px] scale-[.8]"><path d="M4.500 4.500l11 11M15.500 4.500l-11 11" stroke="#b0b1b5" strokeWidth="2.600" /></Cell>
        <Cell className="-mr-[4.400px] scale-[.8]"><g {...g}><circle cx="9" cy="9" r="5.500" /><path d="M8 8h6l3 2-1 6-6 1z" /></g></Cell>
        <Cell className="-mr-[4.400px] scale-[.8]"><path d="M10 6l6 7H4z" {...g} /></Cell>
        <Cell className="-mr-[4.400px] scale-[.8]"><path d="M10 14l6-7H4z" {...g} /></Cell>
        <Cell className="-mr-[4.400px] scale-[.8]"><path d="M6 10l7-6.500v13z" {...g} /></Cell>
        <Cell className="scale-[.8]"><path d="M4 3h12l-4.500 6v8h-3V9z" fill="#4774d6" stroke="#20469b" /></Cell>
      </div>
      <div className="-mt-[3.500px] flex h-[20px] shrink-0 items-center">
        <Cell className="-mr-[4.400px] -ml-[2.500px] scale-[.8]"><path d="M4 3.500h12v13H4zM4 7h12M4 10h12M4 13h12M8 3.500v13M12 3.500v13" fill="#fff" stroke="#888" strokeWidth=".9" /><path d="M4 4h12" stroke="#555" strokeWidth="2" /></Cell>
        <Cell className="-mr-[4.400px] scale-[.8]"><path d="M4.500 5h11M4.500 10h11M4.500 15h11" strokeWidth="1.800" /></Cell>
        <Cell className="scale-[.8]"><Help r={6.5} /></Cell>
      </div>
      <div className="mt-[1.500px] flex h-[15px] shrink-0 items-center rounded-full border border-[#b9c3de] bg-white pl-[2px]">
        <svg viewBox="0 0 10 10" className="h-[10px] w-[10px]" fill="none" stroke="#444"><circle cx="4" cy="4" r="2.800" /><path d="M6 6l3 3" /></svg>
        <Fit w={25} className="ml-px text-[#777]">Buscar</Fit>
      </div>
      <div className="mt-[5px] flex grow flex-col bg-white">
        <div className="flex h-[17px] items-center">
          <Fit w={19} className="ml-[4px]">Capa</Fit>
          <div className="ml-[32px] flex h-[16px] w-[57px] shrink-0 divide-x divide-[#e2e4ea] border-x border-[#e2e4ea]">
            <span className="grow" /><span className="grow" /><span className="grow" /><span className="grow" />
          </div>
          <Fit w={10.5} className="ml-[3px]">Ma</Fit>
        </div>
        <LayerRow name="Predeterm" color="bg-black" current />
        {LAYERS.map(([n, c]) => <LayerRow key={n} name={n} color={c} />)}
        <div className="mt-auto mb-[4px] ml-[5px] h-[6px] w-[34px] rounded-full bg-[#c2c2c2]" />
      </div>
    </div>
  );
}

function PanelTabs() {
  return (
    <div className="flex grow flex-col items-center bg-[#d8d9dd]">
      <div className="flex h-[39px] w-full flex-col items-center rounded-br-[4px] bg-[#e8eaee]">
        <Gear className="mt-[2px] h-[10px] w-[10px]" />
        <Cell className="mt-[6px] scale-[.75]"><LayerWedge /></Cell>
      </div>
      <Cell className="mt-[5px] scale-[.7]"><Wheel r={6} /></Cell>
      <Cell className="mt-[7px] scale-[.75]"><path d="M2.500 3h15v10.500h-15z" fill="#999" stroke="#333" strokeWidth="1.800" /><path d="M10 14v3M6 17h8" stroke="#333" strokeWidth="1.800" /></Cell>
      <Cell className="mt-[6.500px] scale-[.8]"><path d="M3 3h14v13H3z" fill="#eee" stroke="#6d87c6" /><path d="M3 4h14" stroke="#4c6fc0" strokeWidth="2.500" /><g transform="translate(4 4.500) scale(.6)"><Help r={8} /></g></Cell>
      <Cell className="mt-[6.500px] scale-[.75]"><path d="M3 14.500q2-2 2-6T10 3q5 1 5 5.500t2 6z" fill="#168aff" stroke="#1266c4" /><path d="M8 16h4" stroke="#1266c4" strokeWidth="2" /></Cell>
    </div>
  );
}

function Toggle({ w, t, children }) {
  return (
    <div className="flex h-[13px] shrink-0 items-center justify-center rounded-[2px] bg-[#cfd7ec] font-bold text-[#2c3448]" style={{ width: w }}>
      <Fit w={t}>{children}</Fit>
    </div>
  );
}

function StatusBar() {
  return (
    <div className="flex h-[17px] items-center border-b border-[#85868a] bg-[#e8eaee] text-[9.400px] text-[#555]">
      <svg viewBox="0 0 10 10" className="ml-[4px] h-[10px] w-[10px] shrink-0"><path d="M.7.700h8.600v8.600H.7z" fill="#fff" stroke="#333" strokeWidth="1.300" /><path d="M1 1h3v8H1z" fill="#555" /></svg>
      <Fit w={26} className="ml-[19px]">PlanoC</Fit>
      <Fit w={31} className="ml-[33px]">x 126.80</Fit>
      <Fit w={26.5} className="ml-[31px]">y 60.01</Fit>
      <Fit w={11} className="ml-[41.500px]">z 0</Fit>
      <Fit w={32} className="ml-[43px]">0.00 mm</Fit>
      <span className="ml-[22px] h-[12px] w-[11px] shrink-0 bg-black" />
      <Fit w={59} className="ml-[5px]">Predeterminada</Fit>
      <Fit w={67.5} className="ml-[66px]">Forzado a la rejilla</Fit>
      <div className="ml-[9.500px] flex gap-[2.500px]">
        <Toggle w={51} t={41}>Ortogonal</Toggle>
        <Toggle w={33} t={22.5}>Plano</Toggle>
        <Toggle w={37} t={27}>RefObj</Toggle>
        <Toggle w={55.5} t={45}>SmartTrack</Toggle>
        <Toggle w={79} t={69}>Gumball (Objeto)</Toggle>
      </div>
      <svg viewBox="0 0 8 10" className="ml-[7px] h-[10px] w-2 shrink-0" fill="none" stroke="#aaa"><path d="M2 4V2.500q0-2 2-2t2 2V4" /><rect x="1" y="4" width="6" height="5" /></svg>
      <Fit w={77} className="ml-[6px]">PlanoC auto (objeto)</Fit>
      <Fit w={13} className="ml-[18px]">Gra</Fit>
      <svg viewBox="0 0 10 10" className="ml-[2px] h-[10px] w-[10px] shrink-0"><path d="M.7.700h8.600v8.600H.7z" fill="#fff" stroke="#333" strokeWidth="1.300" /><path d="M6 1h3v8H6z" fill="#444" /></svg>
    </div>
  );
}

export default function App() {
  return (
    <div className="h-[557px] w-[979px] overflow-hidden bg-white pt-[5px] pl-[9.500px] font-['Open_Sans','Noto_Sans',sans-serif]">
      <div className="relative flex h-[541px] w-[960px] flex-col bg-[#d8d9dd] shadow-[0_1px_7px_rgba(0,0,0,0.2)]">
        <TitleBar />
        <div className="flex h-[14px] items-center gap-[9.900px] bg-[#e8eaee] pl-[4.500px] text-[9.400px] text-[#333]">
          {MENU.map(([t, w]) => <Fit key={t} w={w}>{t}</Fit>)}
        </div>
        <CommandArea />
        <TopToolbar />
        <div className="mt-[2px] flex h-[407px]">
          <SideToolbar />
          <div className="ml-[3px] flex w-[764px] shrink-0 flex-col pt-[1px]">
            <Viewport />
            <FilterPanel />
            <ViewTabs />
          </div>
          <div className="ml-[2px] flex grow">
            <LayerPanel />
            <PanelTabs />
          </div>
        </div>
        <StatusBar />
        <div className="absolute top-[481px] left-[728.500px] text-[#8b8b8b]/60">
          <Fit w={103} className="text-[13px] leading-[19px]">Activar Windows</Fit>
          <Fit w={194} className="text-[10px] leading-[14px]">Ve a Configuración para activar Windows.</Fit>
        </div>
      </div>
    </div>
  );
}
